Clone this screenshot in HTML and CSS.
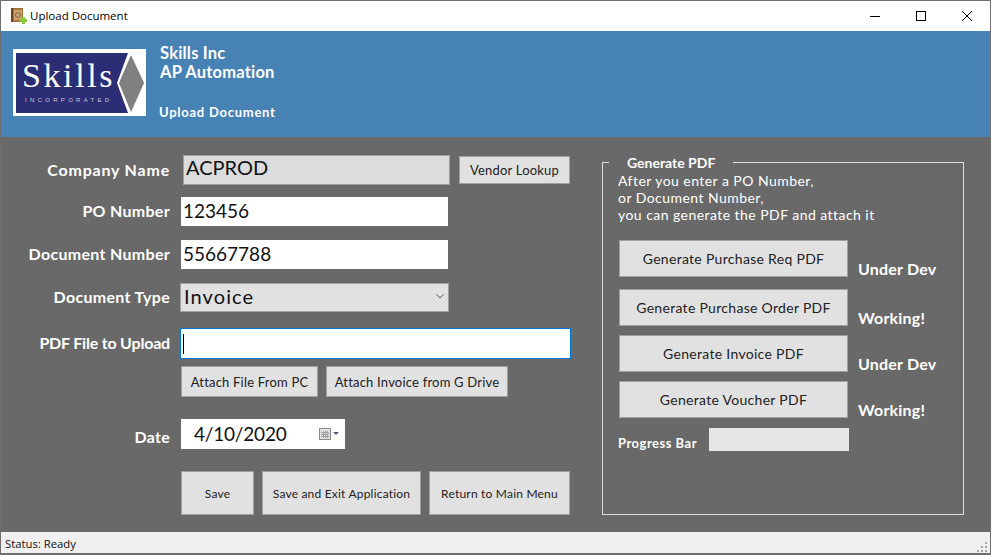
FILE: index.html
```html
<!DOCTYPE html>
<html lang="en">
<head>
    <meta charset="UTF-8">
    <meta name="viewport" content="width=device-width, initial-scale=1.0">
    <title>Upload Document</title>
    <link rel="stylesheet" href="styles.css">
</head>
<body>
<div class="window">
    <div class="titlebar">
        <svg class="appicon" width="16" height="16" viewBox="0 0 16 16">
            <rect x="0" y="0" width="12" height="14" fill="#a9713a"/>
            <rect x="0" y="0" width="2" height="14" fill="#6e4420"/>
            <rect x="3" y="2" width="8" height="10" fill="#c9a26c"/>
            <circle cx="7" cy="7" r="2.500" fill="none" stroke="#7d6a50"/>
            <path d="M11 9h3v2h2v3h-2v2h-3v-2H9v-3h2z" fill="#8cc63f"/>
        </svg>
        <span class="title">Upload Document</span>
        <div class="winbtns">
            <svg width="12" height="12" viewBox="0 0 12 12"><path d="M1 6.500h10" stroke="#000" fill="none"/></svg>
            <svg width="12" height="12" viewBox="0 0 12 12"><rect x="1.500" y="1.500" width="9" height="9" stroke="#000" fill="none"/></svg>
            <svg width="12" height="12" viewBox="0 0 12 12"><path d="M1 1l10 10M11 1L1 11" stroke="#000" fill="none"/></svg>
        </div>
    </div>

    <div class="header">
        <svg class="logo" width="133" height="67" viewBox="0 0 133 67">
            <rect width="133" height="67" fill="#fff"/>
            <path d="M3 4H115L104 34L115 64H3z" fill="#2b2d75"/>
            <path d="M118 6L131 34L118 63L106 34z" fill="#808080"/>
            <text x="9" y="38" class="logotext">Skills</text>
            <text x="12" y="53" class="logosub">INCORPORATED</text>
        </svg>
        <div class="headtext">
            <div class="company">Skills Inc</div>
            <div class="company">AP Automation</div>
            <div class="pagename">Upload Document</div>
        </div>
    </div>

    <div class="main">
        <div class="form">
            <div class="row row-company">
                <label>Company Name</label>
                <div class="field field-readonly field-company">ACPROD</div>
                <button class="btn btn-vendor">Vendor Lookup</button>
            </div>
            <div class="row row-po">
                <label>PO Number</label>
                <div class="field field-num">123456</div>
            </div>
            <div class="row row-doc">
                <label>Document Number</label>
                <div class="field field-num">55667788</div>
            </div>
            <div class="row row-type">
                <label>Document Type</label>
                <div class="field field-readonly field-select">
                    Invoice
                    <svg width="8" height="5" viewBox="0 0 8 5"><path d="M0.500 0.500l3.500 3.500 3.500-3.500" stroke="#555" fill="none"/></svg>
                </div>
            </div>
            <div class="row row-pdf">
                <label>PDF File to Upload</label>
                <div class="field field-focus"><span class="caret"></span></div>
            </div>
            <div class="row row-attach">
                <button class="btn btn-file">Attach File From PC</button>
                <button class="btn btn-drive">Attach Invoice from G Drive</button>
            </div>
            <div class="row row-date">
                <label>Date</label>
                <div class="field field-num field-date">
                    4/10/2020
                    <svg width="20" height="12" viewBox="0 0 20 12">
                        <rect x="0.500" y="0.500" width="11" height="11" fill="#e4e4e4" stroke="#8a8a8a"/>
                        <path d="M2 4.500h8M2 6.500h8M2 8.500h8M4.500 3v7M6.500 3v7M8.500 3v7" stroke="#a0a0a0" fill="none"/>
                        <path d="M14 4h6l-3 3z" fill="#4d5a78"/>
                    </svg>
                </div>
            </div>
            <div class="row row-actions">
                <button class="btn btn-save">Save</button>
                <button class="btn btn-exit">Save and Exit Application</button>
                <button class="btn btn-return">Return to Main Menu</button>
            </div>
        </div>

        <fieldset class="panel">
            <legend>Generate PDF</legend>
            <p class="panel-note">After you enter a PO Number,<br>or Document Number,<br>you can generate the PDF and attach it</p>
            <div class="gen gen-first">
                <button class="btn btn-gen">Generate Purchase Req PDF</button>
                <span class="gen-status">Under Dev</span>
            </div>
            <div class="gen">
                <button class="btn btn-gen">Generate Purchase Order PDF</button>
                <span class="gen-status">Working!</span>
            </div>
            <div class="gen gen-tight">
                <button class="btn btn-gen">Generate Invoice PDF</button>
                <span class="gen-status">Under Dev</span>
            </div>
            <div class="gen gen-tight">
                <button class="btn btn-gen">Generate Voucher PDF</button>
                <span class="gen-status">Working!</span>
            </div>
            <div class="progress-row">
                <span class="progress-label">Progress Bar</span>
                <div class="progress"></div>
            </div>
        </fieldset>
    </div>

    <div class="statusbar">
        <span>Status: Ready</span>
        <svg width="11" height="11" viewBox="0 0 11 11" fill="#a3a3a3">
            <rect x="8" y="0" width="2" height="2"/>
            <rect x="4" y="4" width="2" height="2"/><rect x="8" y="4" width="2" height="2"/>
            <rect x="0" y="8" width="2" height="2"/><rect x="4" y="8" width="2" height="2"/><rect x="8" y="8" width="2" height="2"/>
        </svg>
    </div>
</div>
</body>
</html>
```

FILE: styles.css
```css
* {
    box-sizing: border-box;
}

body {
    margin: 0;
    font-family: Lato, "Open Sans", sans-serif;
    background: #696969;
}

.window {
    width: 991px;
    height: 555px;
    display: flex;
    flex-direction: column;
    border: 1px solid #6e6e6e;
    border-bottom-width: 2px;
}

.titlebar {
    height: 30px;
    flex: none;
    display: flex;
    align-items: center;
    padding-left: 10px;
    background: #fff;
}

.appicon {
    margin-right: 3px;
}

.title {
    font: 11.500px "Open Sans", sans-serif;
    color: #000;
    padding-bottom: 1px;
}

.winbtns {
    margin-left: auto;
    display: flex;
    gap: 34px;
    padding-right: 17px;
}

.header {
    height: 106px;
    flex: none;
    display: flex;
    background: #4682b4;
    padding: 18px 0 0 12px;
}

.logo {
    flex: none;
}

.logotext {
    font: 34px "Liberation Serif", serif;
    letter-spacing: 2.600px;
    fill: #fff;
}

.logosub {
    font: 6px "Liberation Sans", sans-serif;
    letter-spacing: 3.300px;
    fill: #c8c8d8;
}

.headtext {
    margin: -5px 0 0 14px;
    color: #fff;
    font-weight: 700;
}

.company {
    font-size: 16.500px;
    letter-spacing: 0.200px;
    line-height: 19px;
}

.pagename {
    font-size: 13px;
    letter-spacing: 0.750px;
    margin-top: 22px;
    margin-left: -1px;
}

.main {
    flex: 1;
    display: flex;
    background: #696969;
}

.form {
    width: 601px;
    flex: none;
    padding-top: 18px;
}

.row {
    display: flex;
    align-items: center;
}

.row label {
    width: 169px;
    flex: none;
    padding-bottom: 3px;
    text-align: right;
    color: #fff;
    font-size: 16px;
    font-weight: 700;
    letter-spacing: 0.300px;
}

.row-company label {
    padding-bottom: 1px;
    letter-spacing: 0.800px;
}

.row-pdf label {
    letter-spacing: -0.200px;
}

.field {
    width: 267px;
    height: 29px;
    margin-left: 11px;
    padding: 0 0 3px 2px;
    display: flex;
    align-items: center;
    background: #fff;
    color: #111;
    font-size: 20px;
}

.field-num {
    font-size: 19px;
}

.field-readonly {
    background: #dcdcdc;
    border: 1px solid #a0a0a0;
}

.field-company {
    margin-left: 13px;
    height: 30px;
    padding-bottom: 6px;
}

.field-select {
    justify-content: space-between;
    width: 269px;
    margin-left: 10px;
    padding: 0 4px 3px 3px;
    background: #e1e1e1;
    letter-spacing: 1.100px;
}

.field-focus {
    width: 391px;
    height: 31px;
    margin-left: 10px;
    padding-bottom: 0;
    border: 1px solid #0078d7;
}

.caret {
    width: 1px;
    height: 20px;
    background: #000;
}

.field-date {
    width: 164px;
    height: 30px;
    padding: 0 6px 1px 13px;
    justify-content: space-between;
    letter-spacing: -0.200px;
}

.row-date label {
    padding: 4px 0 0;
}

.btn {
    display: block;
    padding: 0;
    background: #e1e1e1;
    border: 1px solid #a0a0a0;
    border-radius: 0;
    color: #222;
    font-family: Lato, "Open Sans", sans-serif;
    font-size: 13px;
    letter-spacing: 0.200px;
}

.btn-vendor {
    width: 111px;
    height: 28px;
    margin-left: 9px;
}

.row-po { margin-top: 12px; }
.row-doc { margin-top: 14px; }
.row-type { margin-top: 14px; }
.row-pdf { margin-top: 16px; }
.row-attach { margin: 7px 0 0 180px; gap: 8px; }
.row-date { margin-top: 22px; }
.row-actions { margin: 22px 0 0 180px; gap: 8px; }

.btn-file { width: 137px; height: 31px; }
.btn-drive { width: 182px; height: 31px; }
.btn-save { width: 73px; height: 44px; }
.btn-exit { width: 159px; height: 44px; }
.btn-return { width: 141px; height: 44px; }

.row-actions .btn {
    font-size: 12px;
}

.panel {
    margin: 17px 0 0 0;
    padding: 0 0 0 16px;
    width: 362px;
    height: 361px;
    min-width: 0;
    border: 1px solid #dcdcdc;
    color: #fff;
}

.panel legend {
    margin-left: -10px;
    padding: 0 18px;
    font-size: 14px;
    font-weight: 700;
}

.panel-note {
    margin: 1px 0 0 -1px;
    font-size: 14px;
    letter-spacing: 0.450px;
    line-height: 17px;
}

.gen {
    display: flex;
    height: 37px;
    margin-top: 12px;
}

.gen-first { margin-top: 17px; }
.gen-tight { margin-top: 9px; }

.btn-gen {
    width: 229px;
    height: 37px;
    flex: none;
    font-size: 14px;
    letter-spacing: 0.300px;
}

.gen-status {
    margin: 20px 0 0 10px;
    font-size: 16px;
    line-height: 18px;
    font-weight: 700;
    letter-spacing: 0.200px;
}

.progress-row {
    display: flex;
    align-items: flex-start;
    margin: 10px 0 0 -1px;
}

.progress-label {
    width: 91px;
    margin-top: 7px;
    font-size: 13px;
    font-weight: 700;
    letter-spacing: 0.500px;
}

.progress {
    width: 140px;
    height: 23px;
    background: #e6e6e6;
}

.statusbar {
    height: 21px;
    flex: none;
    display: flex;
    justify-content: space-between;
    align-items: center;
    margin-top: 1px;
    padding: 2px 2px 0 4px;
    background: #f0f0f0;
    font: 11.300px "Open Sans", sans-serif;
    color: #111;
}

.statusbar svg {
    align-self: flex-end;
}
```
